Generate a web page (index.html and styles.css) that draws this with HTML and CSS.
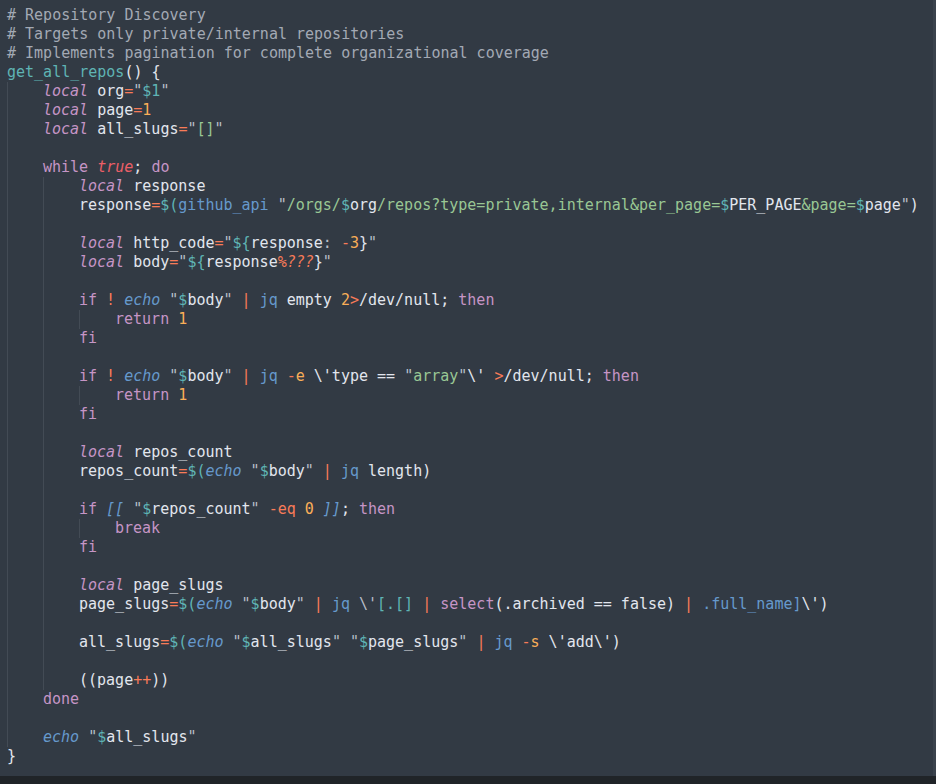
FILE: index.html
```html
<!DOCTYPE html>
<html>
<head>
<meta charset="utf-8">
<link rel="stylesheet" href="styles.css">
</head>
<body>
<div class="editor">
<div class="code">
<div class="ln c"># Repository Discovery</div>
<div class="ln c"># Targets only private/internal repositories</div>
<div class="ln c"># Implements pagination for complete organizational coverage</div>
<div class="ln"><span class="v">get_all_repos</span>() {</div>
<div class="blk">
<div class="ln"><span class="ki">local</span> org<span class="o">=</span><span class="q">"</span><span class="v">$1</span><span class="q">"</span></div>
<div class="ln"><span class="ki">local</span> page<span class="o">=</span><span class="n">1</span></div>
<div class="ln"><span class="ki">local</span> all_slugs<span class="o">=</span><span class="q">"</span><span class="s">[]</span><span class="q">"</span></div>
<div class="ln"> </div>
<div class="ln"><span class="k">while</span> <span class="r">true</span>; <span class="k">do</span></div>
<div class="blk">
<div class="ln"><span class="ki">local</span> response</div>
<div class="ln">response<span class="o">=</span><span class="v">$(</span><span class="f">github_api</span> <span class="q">"</span><span class="s">/orgs/</span><span class="v">$</span>org<span class="s">/repos?type=private,internal&amp;per_page=</span><span class="v">$</span>PER_PAGE<span class="s">&amp;page=</span><span class="v">$</span>page<span class="q">"</span>)</div>
<div class="ln"> </div>
<div class="ln"><span class="ki">local</span> http_code<span class="o">=</span><span class="q">"</span><span class="v">${</span>response<span class="q">:</span> <span class="o">-</span><span class="n">3</span>}<span class="q">"</span></div>
<div class="ln"><span class="ki">local</span> body<span class="o">=</span><span class="q">"</span><span class="v">${</span>response<span class="o">%</span><span class="oi">???</span>}<span class="q">"</span></div>
<div class="ln"> </div>
<div class="ln"><span class="k">if</span> <span class="o">!</span> <span class="fi">echo</span> <span class="q">"</span><span class="v">$</span>body<span class="q">"</span> <span class="o">|</span> <span class="f">jq</span> empty <span class="n">2</span><span class="o">&gt;</span>/dev/null; <span class="k">then</span></div>
<div class="blk">
<div class="ln"><span class="k">return</span> <span class="n">1</span></div>
</div>
<div class="ln"><span class="k">fi</span></div>
<div class="ln"> </div>
<div class="ln"><span class="k">if</span> <span class="o">!</span> <span class="fi">echo</span> <span class="q">"</span><span class="v">$</span>body<span class="q">"</span> <span class="o">|</span> <span class="f">jq</span> <span class="o">-</span><span class="n">e</span> \'type == <span class="q">"</span><span class="s">array</span><span class="q">"</span>\' <span class="o">&gt;</span>/dev/null; <span class="k">then</span></div>
<div class="blk">
<div class="ln"><span class="k">return</span> <span class="n">1</span></div>
</div>
<div class="ln"><span class="k">fi</span></div>
<div class="ln"> </div>
<div class="ln"><span class="ki">local</span> repos_count</div>
<div class="ln">repos_count<span class="o">=</span><span class="v">$(</span><span class="fi">echo</span> <span class="q">"</span><span class="v">$</span>body<span class="q">"</span> <span class="o">|</span> <span class="f">jq</span> length)</div>
<div class="ln"> </div>
<div class="ln"><span class="k">if</span> <span class="fi">[[</span> <span class="q">"</span><span class="v">$</span>repos_count<span class="q">"</span> <span class="o">-eq</span> <span class="n">0</span> <span class="fi">]]</span>; <span class="k">then</span></div>
<div class="blk">
<div class="ln"><span class="k">break</span></div>
</div>
<div class="ln"><span class="k">fi</span></div>
<div class="ln"> </div>
<div class="ln"><span class="ki">local</span> page_slugs</div>
<div class="ln">page_slugs<span class="o">=</span><span class="v">$(</span><span class="fi">echo</span> <span class="q">"</span><span class="v">$</span>body<span class="q">"</span> <span class="o">|</span> <span class="f">jq</span> <span class="q">\'</span><span class="v">[.[]</span> <span class="o">|</span> <span class="k">select</span>(.archived == false) <span class="o">|</span> <span class="f">.full_name]</span>\')</div>
<div class="ln"> </div>
<div class="ln">all_slugs<span class="o">=</span><span class="v">$(</span><span class="fi">echo</span> <span class="q">"</span><span class="v">$</span>all_slugs<span class="q">"</span> <span class="q">"</span><span class="v">$</span>page_slugs<span class="q">"</span> <span class="o">|</span> <span class="f">jq</span> <span class="o">-</span><span class="n">s</span> \'add\')</div>
<div class="ln"> </div>
<div class="ln">((page<span class="o">++</span>))</div>
</div>
<div class="ln"><span class="k">done</span></div>
<div class="ln"> </div>
<div class="ln"><span class="fi">echo</span> <span class="q">"</span><span class="v">$</span>all_slugs<span class="q">"</span></div>
</div>
<div class="ln">}</div>
</div>
</div>
<div class="status"></div>
</body>
</html>
```

FILE: styles.css
```css
html, body {
  margin: 0;
  padding: 0;
  background: #202428;
}
.editor {
  height: 776px;
  background: #323a44;
  border-right: 3px solid #3a424c;
  box-sizing: border-box;
  overflow: hidden;
}
.code {
  padding: 6px 0 0 7px;
  font-family: "DejaVu Sans Mono", "Liberation Mono", monospace;
  font-size: 15px;
  color: #e2e6ee;
}
.ln {
  height: 19px;
  line-height: 19px;
  white-space: pre;
}
.blk {
  border-left: 1px solid #434b55;
  padding-left: 35px;
}
.c { color: #a3a9b4; }
.k { color: #c695c6; }
.ki { color: #c695c6; font-style: italic; }
.s { color: #99c794; }
.v { color: #5fb4b4; }
.f { color: #6699cc; }
.fi { color: #6699cc; font-style: italic; }
.n { color: #f9ae58; }
.o { color: #f97b58; }
.oi { color: #f97b58; font-style: italic; }
.r { color: #ec5f67; font-style: italic; }
.q { color: #b8bec8; }
.status {
  height: 8px;
  background: #202428;
}
```
